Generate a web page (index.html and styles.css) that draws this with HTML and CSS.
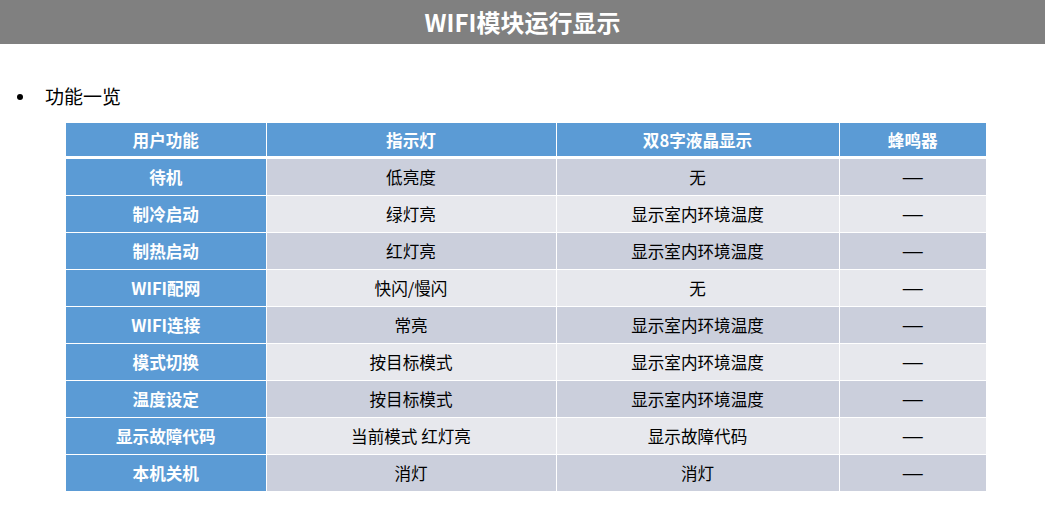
FILE: index.html
```html
<!DOCTYPE html>
<html lang="zh">
<head>
<meta charset="utf-8">
<link rel="stylesheet" href="styles.css">
</head>
<body>
<header class="title-bar"><h1 class="title">WIFI模块运行显示</h1></header>
<ul class="bullets"><li>功能一览</li></ul>
<table class="grid">
<colgroup><col class="c1"><col class="c2"><col class="c3"><col class="c4"></colgroup>
<thead>
<tr><th>用户功能</th><th>指示灯</th><th>双8字液晶显示</th><th>蜂鸣器</th></tr>
</thead>
<tbody>
<tr class="odd"><th>待机</th><td>低亮度</td><td>无</td><td class="dash">—</td></tr>
<tr class="even"><th>制冷启动</th><td>绿灯亮</td><td>显示室内环境温度</td><td class="dash">—</td></tr>
<tr class="odd"><th>制热启动</th><td>红灯亮</td><td>显示室内环境温度</td><td class="dash">—</td></tr>
<tr class="even"><th>WIFI配网</th><td>快闪/慢闪</td><td>无</td><td class="dash">—</td></tr>
<tr class="odd"><th>WIFI连接</th><td>常亮</td><td>显示室内环境温度</td><td class="dash">—</td></tr>
<tr class="even"><th>模式切换</th><td>按目标模式</td><td>显示室内环境温度</td><td class="dash">—</td></tr>
<tr class="odd"><th>温度设定</th><td>按目标模式</td><td>显示室内环境温度</td><td class="dash">—</td></tr>
<tr class="even"><th>显示故障代码</th><td>当前模式 红灯亮</td><td>显示故障代码</td><td class="dash">—</td></tr>
<tr class="odd"><th>本机关机</th><td>消灯</td><td>消灯</td><td class="dash">—</td></tr>
</tbody>
</table>
</body>
</html>
```
FILE: styles.css
```css
html, body {
  margin: 0;
  padding: 0;
  background: #ffffff;
  font-family: "Noto Sans CJK SC", "Liberation Sans", sans-serif;
  color: #000000;
}
.title-bar {
  background: #808080;
  height: 44px;
  display: flex;
  align-items: center;
  justify-content: center;
}
.title {
  margin: 0;
  color: #ffffff;
  font-size: 24px;
  font-weight: bold;
  line-height: 44px;
}
.bullets {
  margin: 38px 0 0 0;
  padding: 0 0 0 45px;
  font-size: 19px;
  line-height: 28px;
  height: 41px;
}
.bullets li {
  list-style: none;
  position: relative;
}
.bullets li::before {
  content: "";
  position: absolute;
  left: -28px;
  top: 12px;
  width: 6px;
  height: 6px;
  border-radius: 50%;
  background: #000000;
}
.grid {
  margin-left: 66px;
  width: 920px;
  border-collapse: collapse;
  table-layout: fixed;
  font-size: 16.6px;
}
.c1 { width: 200px; }
.c2 { width: 290px; }
.c3 { width: 283px; }
.c4 { width: 147px; }
.grid th, .grid td {
  border: 1px solid #ffffff;
  text-align: center;
  padding: 0;
  height: 36px;
  line-height: 20px;
}
.grid thead th {
  background: #5b9bd5;
  color: #ffffff;
  font-weight: bold;
  height: 33px;
  border-top: none;
  border-bottom: 3px solid #ffffff;
}
.grid tr > :first-child { border-left: none; }
.grid tr > :last-child { border-right: none; }
.grid tbody tr:last-child > * { border-bottom: none; }
.grid tbody th {
  background: #5b9bd5;
  color: #ffffff;
  font-weight: bold;
}
.grid .odd td { background: #cbcfdc; }
.grid .even td { background: #e7e8ed; }
.grid td.dash {
  font-family: "Liberation Sans", sans-serif;
  font-size: 20px;
}
```
